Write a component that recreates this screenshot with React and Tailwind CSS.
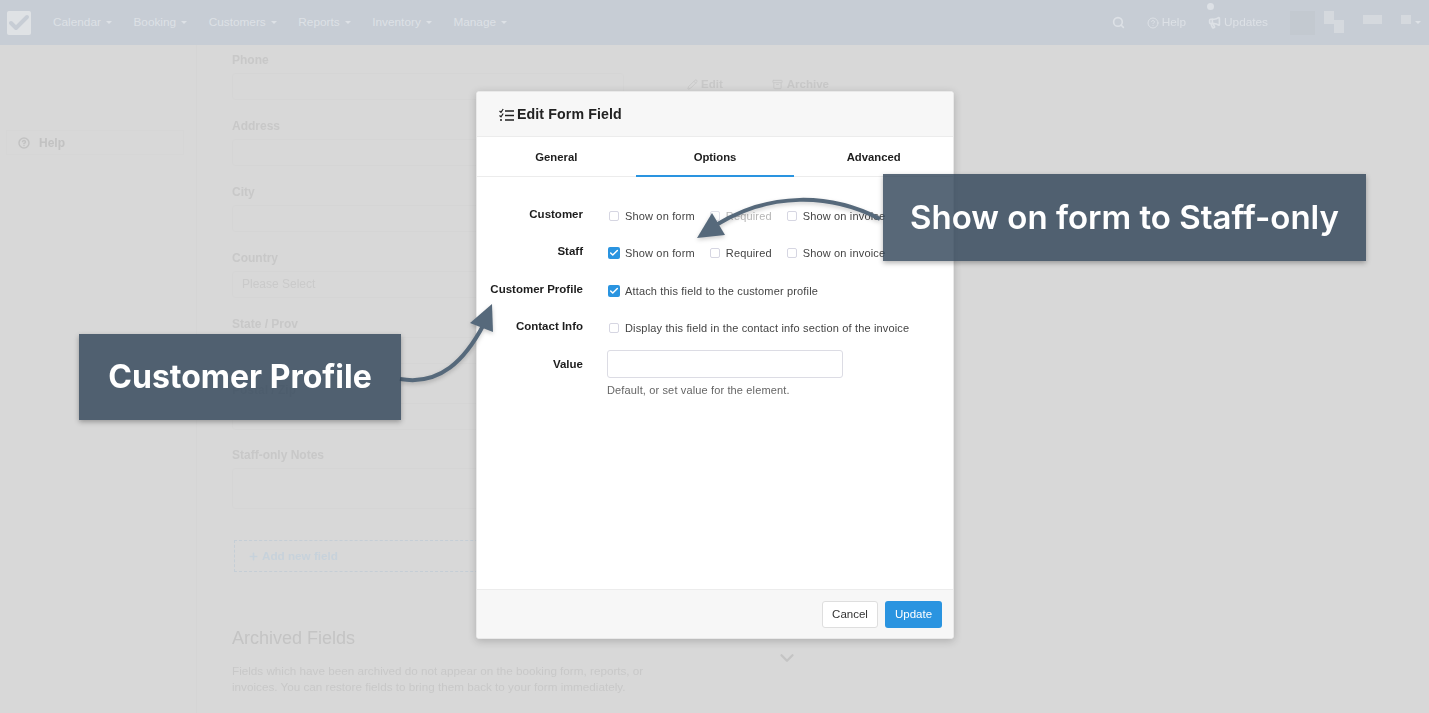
import React from 'react';
import { Search, CircleHelp, Megaphone, Pencil, Archive, ChevronDown, Plus, Check } from 'lucide-react';

const NAV = ['Calendar', 'Booking', 'Customers', 'Reports', 'Inventory', 'Manage'];

function Caret({ className = '' }) {
  return <span className={`inline-block border-x-[3px] border-t-[3px] border-x-transparent border-t-[#dde1e6] ${className}`} />;
}

function Field({ label, placeholder, className = 'h-[66px]' }) {
  return (
    <div className={className}>
      <div className="text-[12px] leading-[14px] font-bold text-[#c8c8c8]">{label}</div>
      <div className="mt-[6px] h-[27px] w-[392px] rounded-[3px] border border-[#d5d5d5] px-[9px] text-[12px] leading-[25px] text-[#cacaca]">{placeholder}</div>
    </div>
  );
}

function Box({ checked, muted }) {
  if (checked) {
    return (
      <span className="flex h-[12px] w-[12px] shrink-0 items-center justify-center rounded-[2px] bg-[#2a94e0]">
        <Check size={10} strokeWidth={3.5} className="text-white" />
      </span>
    );
  }
  return <span className={`ml-[1px] mr-[1px] h-[10px] w-[10px] shrink-0 rounded-[2px] border ${muted ? 'border-[#e2e2ea]' : 'border-[#d6d6e2]'}`} />;
}

function Opt({ checked, muted, label, className = '' }) {
  return (
    <span className={`flex items-center gap-[5px] ${className}`}>
      <Box checked={checked} muted={muted} />
      <span className={`whitespace-nowrap tracking-[0.16px] ${muted ? 'text-[#b5b5b5]' : 'text-[#444]'}`}>{label}</span>
    </span>
  );
}

function Row({ label, children, className = '' }) {
  return (
    <div className={`flex h-[37.4px] items-start ${className}`}>
      <div className="w-[106px] pt-[1px] text-right text-[11.5px] leading-[14px] font-bold text-[#1d1d1d]">{label}</div>
      <div className="ml-[25px] flex pt-[3px] text-[11px] leading-[14px]">{children}</div>
    </div>
  );
}

export default function App() {
  return (
    <div className="relative h-[713px] w-[1429px] overflow-hidden bg-[#d8d8d8] font-['Liberation_Sans',sans-serif]">
      {/* dimmed page behind the modal */}
      <div className="blur-[0.6px]">
        <header className="flex h-[45px] items-center bg-[#c7cdd5] text-[11.8px] text-[#dde1e6]">
          <div className="ml-[7px] flex h-[24px] w-[24px] items-center justify-center rounded-[2px] bg-[#dfe2e5]">
            <Check size={24} strokeWidth={4} className="text-[#c7cdd5]" />
          </div>
          <nav className="ml-[22px] flex gap-[21.6px]">
            {NAV.map(n => (
              <span key={n} className="flex items-center gap-[5px]">{n}<Caret /></span>
            ))}
          </nav>
          <div className="ml-auto flex h-full items-center">
            <Search size={13} strokeWidth={3} className="text-[#dde1e6]" />
            <span className="ml-[22px] flex items-center gap-[3px]"><CircleHelp size={12} />Help</span>
            <span className="relative ml-[22px] flex items-center gap-[3px]">
              <span className="absolute -top-[11px] left-[-1px] h-[7px] w-[7px] rounded-full bg-[#dde1e6]" />
              <Megaphone size={13} strokeWidth={3} />Updates
            </span>
            <span className="ml-[22px] h-[24px] w-[25px] bg-[#c3c9d0]" />
            <span className="ml-[9px] flex h-[24px] w-[20px] items-start"><span className="h-[13px] w-[10px] bg-[#d5d9de]" /><span className="mt-[9px] h-[13px] w-[10px] bg-[#d5d9de]" /></span>
            <span className="mb-[7px] ml-[19px] h-[9px] w-[19px] bg-[#d5d9de]" />
            <span className="mb-[7px] ml-[19px] h-[9px] w-[10px] bg-[#d5d9de]" />
            <Caret className="ml-[4px] mr-[8px]" />
          </div>
        </header>

        <div className="flex">
          <aside className="h-[668px] w-[197px] border-r border-[#d5d5d5] pt-[85px]">
            <div className="ml-[6px] flex h-[25px] w-[178px] items-center border border-[#d6d6d6] pl-[11px] text-[12px] font-bold text-[#c2c2c2]">
              <CircleHelp size={12} strokeWidth={3} />
              <span className="ml-[9px]">Help</span>
            </div>
          </aside>
          <main className="flex pl-[35px] pt-[8px]">
            <div className="w-[455px]">
              <Field label="Phone" />
              <Field label="Address" />
              <Field label="City" />
              <Field label="Country" placeholder="Please Select" />
              <Field label="State / Prov" />
              <Field label="Postal / Zip" className="h-[65px]" />
              <div className="h-[92px]">
                <div className="text-[12px] leading-[14px] font-bold text-[#c8c8c8]">Staff-only Notes</div>
                <div className="mt-[6px] h-[41px] w-[392px] rounded-[3px] border border-[#d5d5d5]" />
              </div>
              <div className="ml-[2px] flex h-[32px] w-[390px] items-center border border-dashed border-[#c5ced6] pl-[13px] text-[11.7px] font-bold text-[#c7d2db]">
                <Plus size={11} strokeWidth={3.5} />
                <span className="ml-[3px]">Add new field</span>
              </div>
              <h2 className="mt-[54px] text-[18px] leading-[24px] text-[#c4c4c4]">Archived Fields</h2>
              <p className="mt-[13px] w-[430px] text-[11.7px] leading-[16px] text-[#c8c8c8]">
                Fields which have been archived do not appear on the booking form, reports, or invoices. You can restore fields to bring them back to your form immediately.
              </p>
            </div>
            <div className="flex flex-col">
              <div className="mt-[23px] flex text-[11.5px] font-bold text-[#c8c8c8]">
                <span className="flex items-center gap-[3px]"><Pencil size={11} />Edit</span>
                <span className="ml-[49px] flex items-center gap-[4px]"><Archive size={11} />Archive</span>
              </div>
              <ChevronDown size={22} strokeWidth={2.5} className="ml-[89px] mt-[554px] text-[#c4c4c4]" />
            </div>
          </main>
        </div>
      </div>

      {/* modal */}
      <div className="absolute left-[476px] top-[91px] flex h-[548px] w-[478px] flex-col overflow-hidden rounded-[3px] border border-[#e9e9e9] bg-white shadow-[0_2px_8px_rgba(0,0,0,0.2)]">
        <div className="flex h-[45px] shrink-0 items-center border-b border-[#ececec] bg-[#f7f7f7] pl-[22px] pt-[1px]">
          <svg width="15" height="14" viewBox="0 0 15 14" className="text-[#222]">
            <path d="M0.5 3 L2 4.3 L4.2 1" fill="none" stroke="currentColor" strokeWidth="1.2" />
            <path d="M0.5 7.5 L2 8.8 L4.2 5.5" fill="none" stroke="currentColor" strokeWidth="1.2" />
            <circle cx="2" cy="12" r="1" fill="currentColor" />
            <path d="M6 3h9M6 7.5h9M6 12h9" stroke="currentColor" strokeWidth="1.5" />
          </svg>
          <span className="ml-[3px] text-[14.2px] font-bold tracking-[0.1px] text-[#222]">Edit Form Field</span>
        </div>
        <div className="grid h-[40px] shrink-0 grid-cols-3 border-b border-[#ececec] text-center text-[11.3px] leading-[40px] font-bold text-[#1d1d1d]">
          <div>General</div>
          <div className="h-[40px] border-b-2 border-[#2a94e0]">Options</div>
          <div>Advanced</div>
        </div>
        <div className="flex-1 pt-[29px]">
          <Row label="Customer">
            <Opt label="Show on form" />
            <Opt muted label="Required" className="ml-[14px]" />
            <Opt label="Show on invoice" className="ml-[14px]" />
          </Row>
          <Row label="Staff">
            <Opt checked label="Show on form" />
            <Opt label="Required" className="ml-[14px]" />
            <Opt label="Show on invoice" className="ml-[14px]" />
          </Row>
          <Row label="Customer Profile">
            <Opt checked label="Attach this field to the customer profile" />
          </Row>
          <Row label="Contact Info">
            <Opt label="Display this field in the contact info section of the invoice" />
          </Row>
          <div className="flex items-start">
            <div className="w-[106px] pt-[1px] text-right text-[11.5px] leading-[14px] font-bold text-[#1d1d1d]">Value</div>
            <div className="ml-[24px] -mt-[6px]">
              <div className="h-[28px] w-[236px] rounded-[3px] border border-[#dcdce4]" />
              <div className="mt-[5px] text-[11px] leading-[14px] tracking-[0.14px] text-[#666]">Default, or set value for the element.</div>
            </div>
          </div>
        </div>
        <div className="flex h-[49px] shrink-0 items-center justify-end gap-[7px] border-t border-[#ececec] bg-[#f7f7f7] pr-[11px] pt-[1px]">
          <button className="h-[27px] w-[56px] rounded-[3px] border border-[#dedede] bg-white text-[11.5px] text-[#333]">Cancel</button>
          <button className="h-[27px] w-[57px] rounded-[3px] bg-[#2a94e0] text-[11.5px] text-white">Update</button>
        </div>
      </div>

      {/* annotation arrows */}
      <svg width="1429" height="713" viewBox="0 0 1429 713" className="pointer-events-none absolute left-0 top-0 drop-shadow-[0_2px_2px_rgba(0,0,0,0.2)]">
        <path d="M400 379 C440 386 465 360 484 324" fill="none" stroke="#56697b" strokeWidth="4" />
        <path d="M492 304 L470 323 L493 332 Z" fill="#56697b" />
        <path d="M880 219 C830 193 770 192 716 225" fill="none" stroke="#56697b" strokeWidth="4" />
        <path d="M697 238 L712 213 L725 235 Z" fill="#56697b" />
      </svg>

      {/* annotation callouts */}
      <div className="absolute left-[79px] top-[334px] flex h-[86px] w-[322px] items-center justify-center bg-[#2e4256]/80 text-[32px] font-bold text-white shadow-[0_2px_5px_rgba(0,0,0,0.3)] font-['Inter',sans-serif]">
        Customer Profile
      </div>
      <div className="absolute left-[883px] top-[174px] flex h-[87px] w-[483px] items-center justify-center bg-[#2e4256]/80 text-[33px] font-semibold text-white shadow-[0_2px_5px_rgba(0,0,0,0.3)] font-['Inter',sans-serif]">
        Show on form to Staff-only
      </div>
    </div>
  );
}
